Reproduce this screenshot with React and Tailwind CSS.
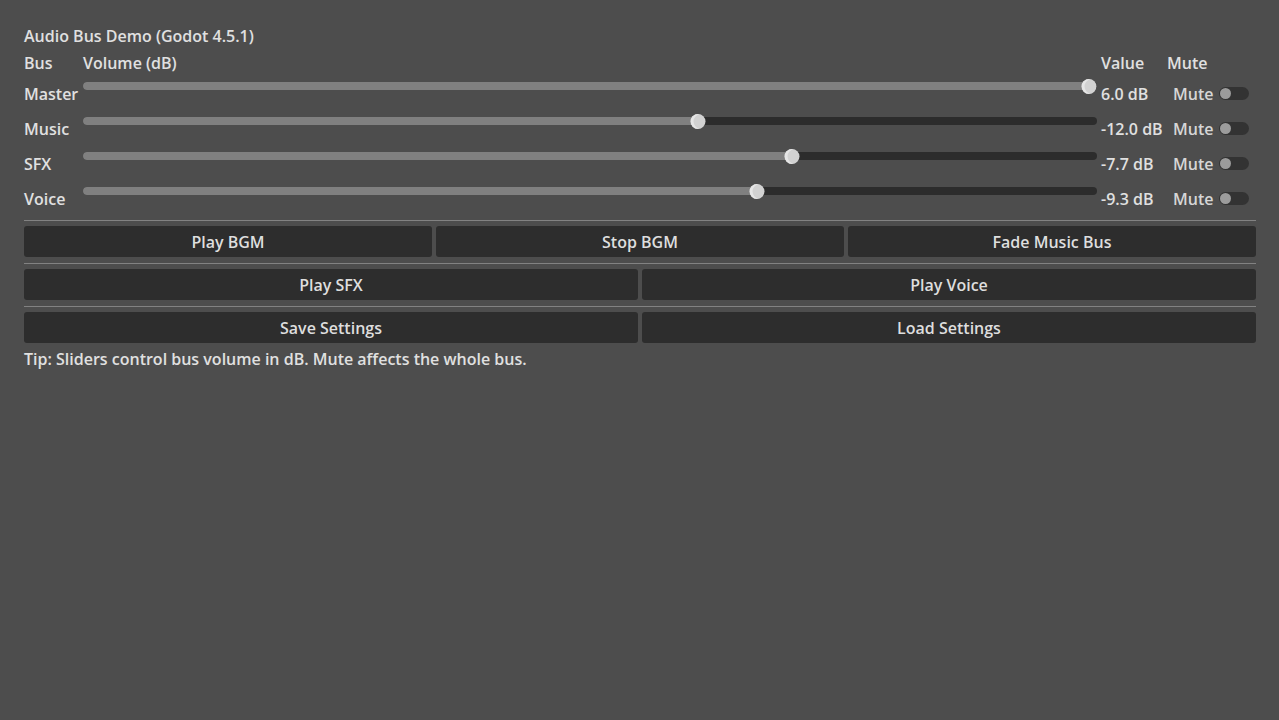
const buses = [
  { name: "Master", db: 6.0, muted: false },
  { name: "Music", db: -12.0, muted: false },
  { name: "SFX", db: -7.7, muted: false },
  { name: "Voice", db: -9.3, muted: false },
];

const MIN_DB = -40;
const MAX_DB = 6;

const Text = ({ children }) => <span className="relative top-px whitespace-nowrap">{children}</span>;

const Slider = ({ db }) => {
  const frac = (db - MIN_DB) / (MAX_DB - MIN_DB);
  const pos = `calc(8px + ${frac} * (100% - 16px))`;
  return (
    <div className="relative h-4 self-start">
      <div className="absolute inset-x-0 top-1 h-2 rounded-full bg-[#2c2c2c]" />
      <div className="absolute left-0 top-1 h-2 rounded-full bg-[#808080]" style={{ width: pos }} />
      <div
        className="absolute top-[1px] h-[15px] w-[15px] -translate-x-1/2 rounded-full bg-[#d2d2d2] shadow-[inset_3px_0_0_#e6e6e6]"
        style={{ left: pos }}
      />
    </div>
  );
};

const MuteToggle = () => (
  <div className="flex h-[31px] items-center justify-between pl-[6px] pr-[7px] text-[#d6d6d6]">
    <Text>Mute</Text>
    <div className="flex h-[13px] w-[30px] items-center rounded-full bg-[#333333] px-[1px]">
      <div className="h-[11px] w-[11px] rounded-full bg-[#9c9c9c]" />
    </div>
  </div>
);

const Separator = () => (
  <div className="flex h-1 items-center">
    <div className="h-px w-full bg-[#828282]" />
  </div>
);

const Button = ({ children }) => (
  <button className="flex h-[31px] items-center justify-center rounded-[3px] bg-[#2d2d2d] text-[#dedede]">
    <Text>{children}</Text>
  </button>
);

export default function App() {
  return (
    <div className="min-h-screen bg-[#4d4d4d] pl-6 pr-[23px] pt-[24px] text-[16px] font-semibold leading-[23px] text-[#e0e0e0] [font-family:'Open_Sans',sans-serif]">
      <div className="flex flex-col gap-1">
        <div className="h-[23px]"><Text>Audio Bus Demo (Godot 4.5.1)</Text></div>

        <div className="grid grid-cols-[55px_1fr_62px_89px] gap-1">
          <div className="h-[23px]"><Text>Bus</Text></div>
          <div><Text>Volume (dB)</Text></div>
          <div><Text>Value</Text></div>
          <div><Text>Mute</Text></div>

          {buses.map((bus) => (
            <div key={bus.name} className="contents">
              <div className="flex h-[31px] items-center"><Text>{bus.name}</Text></div>
              <Slider db={bus.db} />
              <div className="flex items-center"><Text>{bus.db.toFixed(1)} dB</Text></div>
              <MuteToggle />
            </div>
          ))}
        </div>

        <Separator />
        <div className="grid grid-cols-3 gap-1">
          <Button>Play BGM</Button>
          <Button>Stop BGM</Button>
          <Button>Fade Music Bus</Button>
        </div>
        <Separator />
        <div className="grid grid-cols-2 gap-1">
          <Button>Play SFX</Button>
          <Button>Play Voice</Button>
        </div>
        <Separator />
        <div className="grid grid-cols-2 gap-1">
          <Button>Save Settings</Button>
          <Button>Load Settings</Button>
        </div>
        <div><Text>Tip: Sliders control bus volume in dB. Mute affects the whole bus.</Text></div>
      </div>
    </div>
  );
}
